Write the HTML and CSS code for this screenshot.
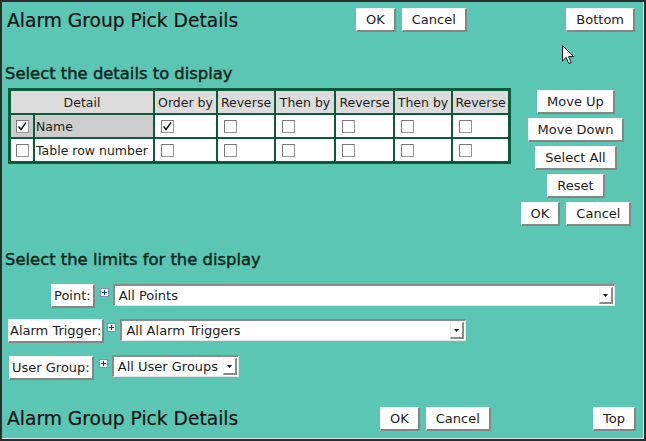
FILE: index.html
```html
<!DOCTYPE html>
<html>
<head>
<meta charset="utf-8">
<title>Alarm Group Pick Details</title>
<link rel="stylesheet" href="styles.css">
</head>
<body>
<div class="frame">
  <div class="bar bar-top">
    <h1 class="title">Alarm Group Pick Details</h1>
    <div class="pair">
      <button class="btn">OK</button>
      <button class="btn">Cancel</button>
    </div>
    <button class="btn push">Bottom</button>
  </div>

  <h2 class="section section-details">Select the details to display</h2>
  <div class="details">
    <table class="grid">
      <colgroup>
        <col class="c-check"><col class="c-name"><col class="c-order"><col class="c-rev1">
        <col class="c-then1"><col class="c-rev2"><col class="c-then2"><col class="c-rev3">
      </colgroup>
      <tr>
        <th colspan="2">Detail</th><th>Order by</th><th>Reverse</th><th>Then by</th><th>Reverse</th><th>Then by</th><th>Reverse</th>
      </tr>
      <tr>
        <td class="cb-cell hl"><span class="cb center"><svg viewBox="0 0 13 13" width="13" height="13"><path d="M2.5 6.5 L5 9.5 L10 2.5" fill="none" stroke="#111" stroke-width="1.4"/></svg></span></td>
        <td class="name hl">Name</td>
        <td class="box"><span class="cb"><svg viewBox="0 0 13 13" width="13" height="13"><path d="M2.5 6.5 L5 9.5 L10 2.5" fill="none" stroke="#111" stroke-width="1.4"/></svg></span></td>
        <td class="box"><span class="cb"></span></td>
        <td class="box"><span class="cb"></span></td>
        <td class="box"><span class="cb"></span></td>
        <td class="box"><span class="cb"></span></td>
        <td class="box"><span class="cb"></span></td>
      </tr>
      <tr>
        <td class="cb-cell"><span class="cb center"></span></td>
        <td class="name">Table row number</td>
        <td class="box"><span class="cb"></span></td>
        <td class="box"><span class="cb"></span></td>
        <td class="box"><span class="cb"></span></td>
        <td class="box"><span class="cb"></span></td>
        <td class="box"><span class="cb"></span></td>
        <td class="box"><span class="cb"></span></td>
      </tr>
    </table>
    <div class="side">
      <button class="btn">Move Up</button>
      <button class="btn">Move Down</button>
      <button class="btn">Select All</button>
      <button class="btn">Reset</button>
      <div class="pair">
        <button class="btn">OK</button>
        <button class="btn">Cancel</button>
      </div>
    </div>
  </div>

  <h2 class="section section-limits">Select the limits for the display</h2>

  <div class="limit limit-point">
    <button class="btn lbl">Point:</button>
    <span class="plus"><svg viewBox="0 0 9 9" width="9" height="9"><rect x="0.5" y="0.5" width="8" height="8" fill="#eef3fb" stroke="#8090b0"/><path d="M2 4.5 H7 M4.5 2 V7" stroke="#1c3a8a" stroke-width="1"/></svg></span>
    <div class="dd dd-point"><span class="dd-text">All Points</span><span class="arrow"><svg viewBox="0 0 5 3" width="5" height="3"><path d="M0 0 H5 L2.5 3 Z" fill="#111"/></svg></span></div>
  </div>

  <div class="limit limit-alarm">
    <button class="btn lbl">Alarm Trigger:</button>
    <span class="plus"><svg viewBox="0 0 9 9" width="9" height="9"><rect x="0.5" y="0.5" width="8" height="8" fill="#eef3fb" stroke="#8090b0"/><path d="M2 4.5 H7 M4.5 2 V7" stroke="#1c3a8a" stroke-width="1"/></svg></span>
    <div class="dd dd-alarm"><span class="dd-text">All Alarm Triggers</span><span class="arrow"><svg viewBox="0 0 5 3" width="5" height="3"><path d="M0 0 H5 L2.5 3 Z" fill="#111"/></svg></span></div>
  </div>

  <div class="limit limit-user">
    <button class="btn lbl">User Group:</button>
    <span class="plus"><svg viewBox="0 0 9 9" width="9" height="9"><rect x="0.5" y="0.5" width="8" height="8" fill="#eef3fb" stroke="#8090b0"/><path d="M2 4.5 H7 M4.5 2 V7" stroke="#1c3a8a" stroke-width="1"/></svg></span>
    <div class="dd dd-user"><span class="dd-text">All User Groups</span><span class="arrow"><svg viewBox="0 0 5 3" width="5" height="3"><path d="M0 0 H5 L2.5 3 Z" fill="#111"/></svg></span></div>
  </div>

  <div class="bar bar-bottom">
    <h1 class="title title-bottom">Alarm Group Pick Details</h1>
    <div class="pair">
      <button class="btn">OK</button>
      <button class="btn">Cancel</button>
    </div>
    <button class="btn push">Top</button>
  </div>

  <svg class="cursor" viewBox="0 0 13 20" width="13" height="20"><path d="M0.5 0.5 V16 L4.2 12.4 L6.8 18.5 L9.2 17.5 L6.6 11.6 L11.5 11.6 Z" fill="#fff" stroke="#111" stroke-width="1" stroke-linejoin="round"/></svg>
</div>
</body>
</html>
```

FILE: styles.css
```css
html, body {
  margin: 0;
  padding: 0;
}

body {
  width: 646px;
  height: 441px;
  overflow: hidden;
  font-family: "DejaVu Sans", Verdana, sans-serif;
  color: #141414;
}

.frame {
  position: relative;
  box-sizing: border-box;
  width: 646px;
  height: 441px;
  background: #5cc6b4;
  border: 2px solid #2c2c2c;
  box-shadow: inset 0 -1px 0 #d8e8e4, inset -1px 0 0 #d8e8e4;
  display: flex;
  flex-direction: column;
  align-items: flex-start;
}

.bar {
  display: flex;
  align-items: center;
  align-self: stretch;
}

.bar-top {
  padding: 6px 9px 0 5px;
}

.bar-bottom {
  margin-top: 27px;
  padding: 0 8px 0 5px;
}

.title {
  box-sizing: border-box;
  margin: 0;
  height: 24px;
  padding-top: 2px;
  font-size: 18.67px;
  font-weight: normal;
  line-height: 22px;
  width: 349px;
  color: #111;
  -webkit-text-stroke: 0.2px #111;
}

.title-bottom {
  width: 373px;
  padding-top: 1px;
}

.pair {
  display: flex;
  gap: 6px;
}

.btn {
  box-sizing: border-box;
  height: 24px;
  padding: 0 9px;
  margin: 0;
  background: #fff;
  border-style: solid;
  border-width: 1px 2px 2px 1px;
  border-color: #f2f2f2 #858585 #858585 #f2f2f2;
  border-radius: 0;
  font-family: "DejaVu Sans", Verdana, sans-serif;
  font-size: 13px;
  color: #1c1c1c;
  line-height: 20px;
  white-space: nowrap;
}

.btn.push {
  margin-left: auto;
}

.section {
  margin: 0;
  padding-left: 3px;
  font-size: 16.4px;
  font-weight: normal;
  line-height: 18px;
  color: #0e2820;
  -webkit-text-stroke: 0.45px #0e2820;
}

.section-details {
  margin-top: 33px;
  margin-bottom: 5px;
}

.section-limits {
  margin-top: 25px;
  margin-bottom: 15px;
}

.details {
  display: flex;
  align-items: flex-start;
  padding-left: 6px;
}

.grid {
  table-layout: fixed;
  border-collapse: separate;
  border-spacing: 2px;
  border: 1px solid #0b5b3a;
  background: #0b5b3a;
  font-size: 12.5px;
  color: #1c1c1c;
}

.c-check { width: 22px; }
.c-name { width: 118px; }
.c-order { width: 61px; }
.c-rev1 { width: 56px; }
.c-then1 { width: 58px; }
.c-rev2 { width: 57px; }
.c-then2 { width: 56px; }
.c-rev3 { width: 55px; }

.grid th {
  height: 22px;
  padding: 0;
  background: #dcdcdc;
  font-weight: normal;
  text-align: center;
  white-space: nowrap;
}

.grid td {
  height: 22px;
  padding: 0;
  background: #fff;
  vertical-align: middle;
  white-space: nowrap;
}

.grid td.hl {
  background: #cdcdcd;
}

.grid td.name {
  padding-left: 1px;
}

.grid td.box {
  padding-left: 6px;
}

.cb {
  display: block;
  box-sizing: border-box;
  width: 13px;
  height: 13px;
  background: #fff;
  border: 1px solid #949494;
  border-top-color: #7a7a7a;
  border-left-color: #7a7a7a;
  position: relative;
}

.cb svg {
  position: absolute;
  left: -1px;
  top: -1px;
}

.cb.center {
  margin: 0 auto;
}

.side {
  width: 122px;
  margin-left: 4px;
  padding-top: 2px;
  display: flex;
  flex-direction: column;
  align-items: center;
  gap: 4px;
}

.limit {
  display: flex;
  align-items: flex-start;
}

.limit-point {
  padding-left: 49px;
}

.limit-alarm {
  margin-top: 11px;
  padding-left: 6px;
}

.limit-user {
  margin-top: 12px;
  padding-left: 7px;
}

.limit-user .lbl {
  margin-top: 1px;
}

.btn.lbl {
  padding: 0 2px;
}

.limit-alarm .btn.lbl {
  padding: 0 1px;
}

.plus {
  display: block;
  width: 9px;
  height: 9px;
  margin: 4px 4px 0 5px;
}

.limit-alarm .plus {
  margin: 4px 4px 0 3px;
}

.plus svg {
  display: block;
}

.dd {
  box-sizing: border-box;
  height: 22px;
  display: flex;
  align-items: center;
  background: #fff;
  border-style: solid;
  border-width: 2px 1px 1px 2px;
  border-color: #8a8a8a #e6e6e6 #e6e6e6 #8a8a8a;
  font-size: 13px;
  color: #1c1c1c;
  padding-left: 4px;
}

.dd-point { width: 502px; }
.dd-alarm { width: 346px; }
.dd-user { width: 127px; }

.dd-text {
  white-space: nowrap;
}

.arrow {
  box-sizing: border-box;
  margin-left: auto;
  margin-right: 1px;
  width: 14px;
  height: 17px;
  display: flex;
  align-items: center;
  justify-content: center;
  background: #fff;
  border-style: solid;
  border-width: 1px 2px 2px 1px;
  border-color: #f0f0f0 #8a8a8a #8a8a8a #f0f0f0;
}

.arrow svg {
  display: block;
}

.cursor {
  position: absolute;
  left: 560px;
  top: 43px;
}
```
